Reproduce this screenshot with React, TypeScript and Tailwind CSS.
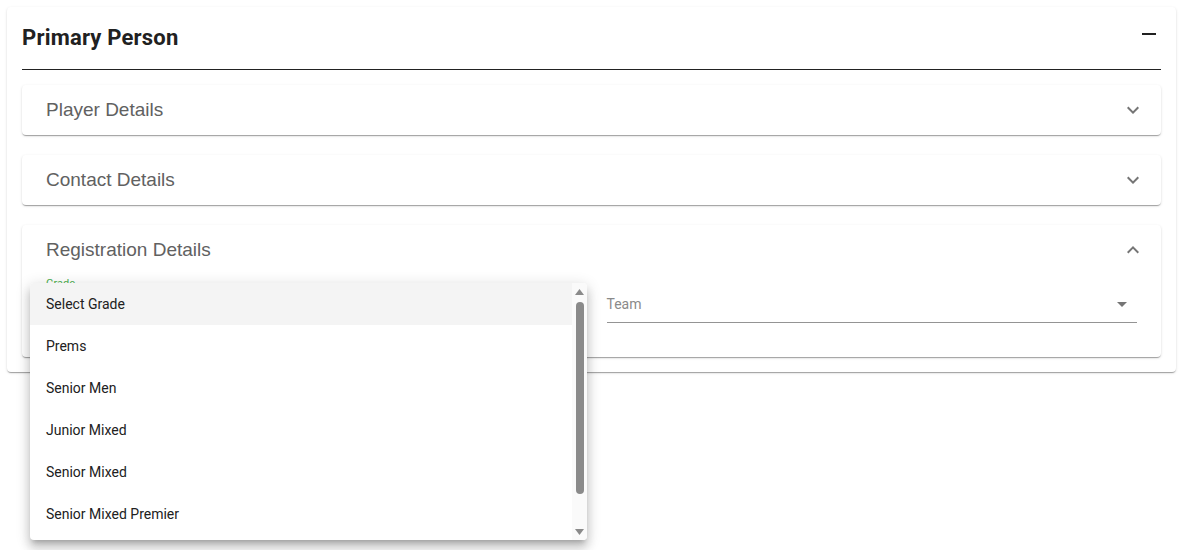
import React from 'react';

const grades = ['Select Grade', 'Prems', 'Senior Men', 'Junior Mixed', 'Senior Mixed', 'Senior Mixed Premier'];

const panelShadow =
  'shadow-[0_2px_1px_-1px_rgba(0,0,0,0.2),0_1px_1px_0_rgba(0,0,0,0.14),0_1px_3px_0_rgba(0,0,0,0.12)]';

function Chevron({ up = false }: { up?: boolean }) {
  return (
    <svg className="w-6 h-6 text-[#757575]" viewBox="0 0 24 24" fill="currentColor">
      {up ? (
        <path d="M12 8l-6 6 1.41 1.41L12 10.83l4.59 4.58L18 14z" />
      ) : (
        <path d="M16.59 8.59L12 13.17 7.41 8.59 6 10l6 6 6-6z" />
      )}
    </svg>
  );
}

function Section({ title, open = false, children }: { title: string; open?: boolean; children?: React.ReactNode }) {
  return (
    <div className={`bg-white rounded-[4px] ${panelShadow}`}>
      <div className="h-[50px] flex items-center justify-between pl-[24px] pr-[16px]">
        <span className="text-[19px] leading-[22px] text-[#616161] font-['Liberation_Sans',Arial,sans-serif]">
          {title}
        </span>
        <Chevron up={open} />
      </div>
      {children}
    </div>
  );
}

function GradeMenu() {
  return (
    <div className="absolute left-[-16px] top-[5px] w-[557px] h-[257px] bg-white rounded-[4px] flex overflow-hidden z-10 shadow-[0_5px_5px_-3px_rgba(0,0,0,0.2),0_8px_10px_1px_rgba(0,0,0,0.14),0_3px_14px_2px_rgba(0,0,0,0.12)]">
      <ul className="flex-1 overflow-hidden">
        {grades.map((g, i) => (
          <li
            key={g}
            className={`h-[42px] flex items-center px-[16px] text-[14px] text-[#212121] ${i === 0 ? 'bg-[#f4f4f4]' : ''}`}
          >
            {g}
          </li>
        ))}
      </ul>
      {/* fake scrollbar */}
      <div className="w-[15px] bg-[#fafafa] flex flex-col items-center">
        <svg className="w-[9px] h-[6px] mt-[6px] text-[#8a8a8a]" viewBox="0 0 9 6" fill="currentColor">
          <path d="M4.5 0L9 6H0z" />
        </svg>
        <div className="w-[8px] h-[192px] mt-[7px] rounded-full bg-[#8a8a8a]" />
        <div className="flex-1" />
        <svg className="w-[9px] h-[6px] mb-[5px] text-[#8a8a8a]" viewBox="0 0 9 6" fill="currentColor">
          <path d="M0 0h9L4.5 6z" />
        </svg>
      </div>
    </div>
  );
}

export default function App() {
  return (
    <div className="bg-white min-h-[550px]" style={{ fontFamily: 'Roboto, "Liberation Sans", sans-serif' }}>
      <div className={`m-[7px] bg-white rounded-[4px] p-[15px] ${panelShadow}`}>
        <div className="flex items-start justify-between pb-[17px] border-b border-[#222]">
          <h2 className="relative top-[1px] text-[22px] leading-[30px] font-bold text-[#212121] tracking-[0.2px]">
            Primary Person
          </h2>
          <svg className="w-6 h-6 text-[#212121]" viewBox="0 0 24 24" fill="currentColor">
            <path d="M19 13H5v-2h14v2z" />
          </svg>
        </div>

        <div className="mt-[15px] flex flex-col gap-[20px]">
          <Section title="Player Details" />
          <Section title="Contact Details" />
          <Section title="Registration Details" open>
            <div className="px-[24px] pt-[3px] pb-[34px] grid grid-cols-2 gap-x-[30px]">
              <div className="relative">
                <div className="h-[12px] text-[11px] leading-[12px] text-[#4caf50]">Grade</div>
                <div className="h-[33px] flex items-center pb-[4px] border-b border-[#949494] text-[14px] text-[#212121]">
                  Select Grade
                </div>
                <GradeMenu />
              </div>
              <div>
                <div className="h-[12px]" />
                <div className="h-[33px] flex items-center justify-between pb-[4px] border-b border-[#949494]">
                  <span className="text-[14px] text-[#8a8a8a]">Team</span>
                  <svg className="w-6 h-6 text-[#757575] mr-[3px]" viewBox="0 0 24 24" fill="currentColor">
                    <path d="M7 10l5 5 5-5z" />
                  </svg>
                </div>
              </div>
            </div>
          </Section>
        </div>
      </div>
    </div>
  );
}
